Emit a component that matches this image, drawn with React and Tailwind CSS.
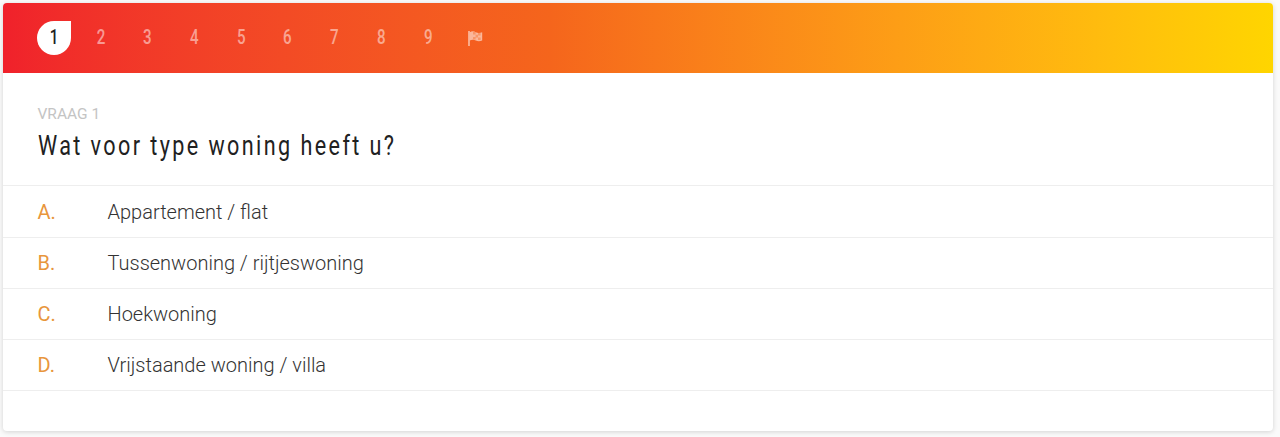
import React from "react";

const options = [
  ["A.", "Appartement / flat"],
  ["B.", "Tussenwoning / rijtjeswoning"],
  ["C.", "Hoekwoning"],
  ["D.", "Vrijstaande woning / villa"],
];

function Flag() {
  return (
    <svg viewBox="0 0 17 17" className="ml-[15.5px] h-[17px] w-[17px]" aria-hidden="true">
      <path d="M1.2 1h1.6v15H1.2z" fill="#fff" fillOpacity="0.6" />
      <path d="M2.8 2.2c2.2-1.3 4.2-1 6 0 2 1 4 1 6.4 0v8.4c-2.4 1-4.4 1-6.4 0-1.8-1-3.8-1.3-6 0z" fill="#fff" fillOpacity="0.55" />
      <path d="M6 2h2.6v2.6H6zM11 3h2.6v2.6H11zM8.6 4.8h2.4v2.6H8.6zM6 7h2.6v2.6H6zM11 7.6h2.6v2.4H11z" fill="#f5651c" fillOpacity="0.4" />
    </svg>
  );
}

export default function App() {
  return (
    <div className="h-[437px] bg-[#fafafa] pt-[3px] pl-[3px] pr-[7px] font-['Roboto',sans-serif]">
      <div className="h-[428px] overflow-hidden rounded-[4px] bg-white shadow-[0_1px_5px_rgba(0,0,0,0.16)]">
        <div className="flex h-[70px] items-center bg-gradient-to-r from-[#f0212b] via-[#f5651c] via-43% to-[#ffd500] pl-[34px]">
          <div className="flex h-[34px] w-[34px] items-center justify-center rounded-full rounded-tr-none bg-white text-[21px] font-medium text-[#222]">
            <span className="inline-block scale-x-[0.72]">1</span>
          </div>
          <div className="flex items-center text-[21px] font-medium text-[#ffffff80]">
            {[2, 3, 4, 5, 6, 7, 8, 9].map((n) => (
              <span key={n} className="inline-block w-[46.8px] scale-x-[0.72] text-center first:ml-[7px] first:w-[46px]">{n}</span>
            ))}
            <Flag />
          </div>
        </div>
        <div className="h-[113px] border-b border-[#eeeeee] px-[34.5px] pt-[32px]">
          <div className="text-[15.5px] leading-[18px] text-[#c4c4c4]">VRAAG 1</div>
          <h1 className="mt-[6px] origin-left scale-x-[0.8] whitespace-nowrap text-[27px] leading-[34px] font-normal tracking-[3px] text-[#212121]">Wat voor type woning heeft u?</h1>
        </div>
        <div>
          {options.map(([letter, label]) => (
            <div key={letter} className="flex h-[51px] items-center border-b border-[#eeeeee] pl-[34.5px] text-[20px] font-light text-[#333333] first:h-[52px]">
              <span className="w-[70px] text-[20px] font-normal text-[#e8963c]">{letter}</span>
              <span>{label}</span>
            </div>
          ))}
        </div>
      </div>
    </div>
  );
}
